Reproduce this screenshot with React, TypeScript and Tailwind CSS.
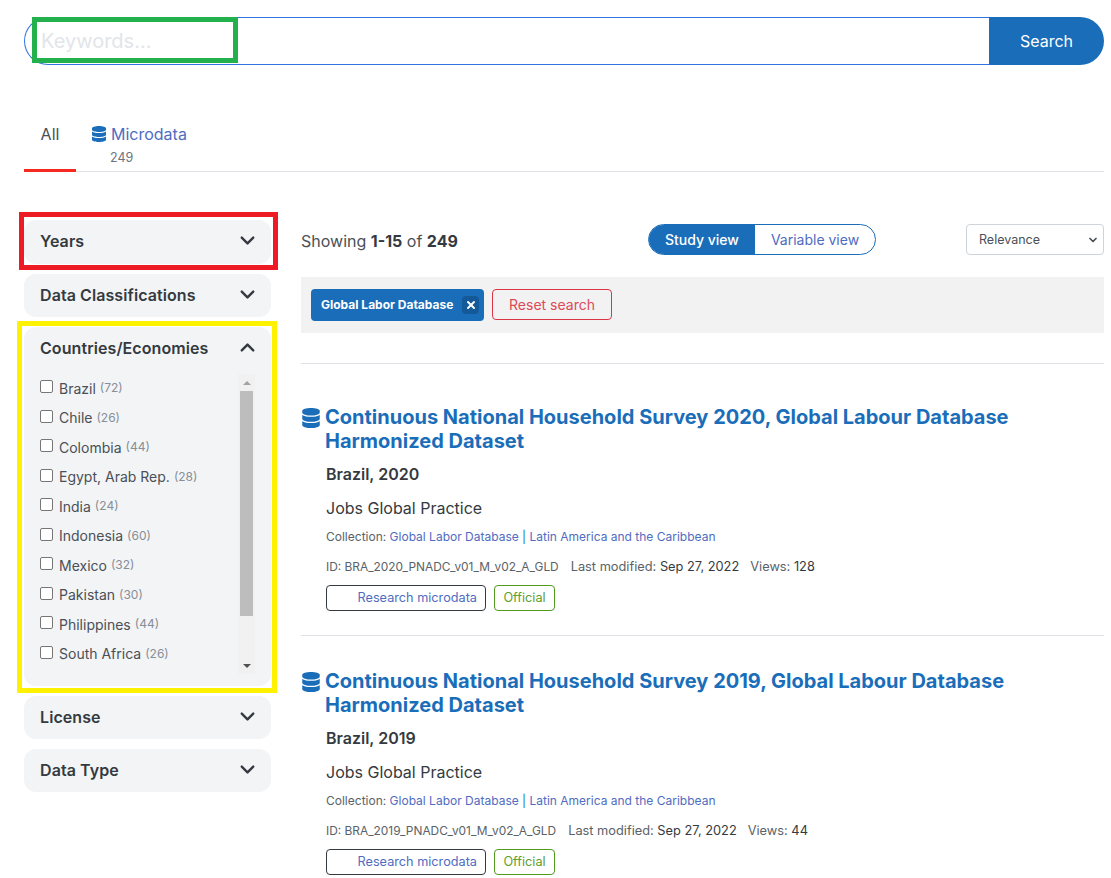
import { ChevronDown, ChevronUp, X } from "lucide-react";

const countries = [
  { name: "Brazil", count: 72 },
  { name: "Chile", count: 26 },
  { name: "Colombia", count: 44 },
  { name: "Egypt, Arab Rep.", count: 28 },
  { name: "India", count: 24 },
  { name: "Indonesia", count: 60 },
  { name: "Mexico", count: 32 },
  { name: "Pakistan", count: 30 },
  { name: "Philippines", count: 44 },
  { name: "South Africa", count: 26 },
];

const studies = [
  { year: 2020, id: "BRA_2020_PNADC_v01_M_v02_A_GLD", modified: "Sep 27, 2022", views: 128 },
  { year: 2019, id: "BRA_2019_PNADC_v01_M_v02_A_GLD", modified: "Sep 27, 2022", views: 44 },
];

function DatabaseIcon({ className }: { className: string }) {
  return (
    <svg className={className} viewBox="0 0 448 512" fill="currentColor">
      <path d="M448 73.1v45.8C448 159.1 347.7 192 224 192S0 159.1 0 118.9V73.1C0 32.9 100.3 0 224 0s224 32.9 224 73.1zM448 176v103c0 40.200-100.300 73-224 73S0 319.200 0 279V176c48.100 33.200 136.200 48.600 224 48.600S399.900 209.200 448 176zm0 160v103c0 40.200-100.300 73-224 73S0 479.200 0 439V336c48.100 33.200 136.200 48.600 224 48.600S399.900 369.200 448 336z" />
    </svg>
  );
}

function FilterCard({ title, tall }: { title: string; tall?: boolean }) {
  return (
    <div className={`flex items-center justify-between rounded-xl bg-[#f3f4f6] pl-4 pr-[12px] ${tall ? "h-[44px]" : "h-[43px]"}`}>
      <span className="mb-[2px] text-[16px] font-semibold tracking-[0.08px] text-[#343a40]">{title}</span>
      <ChevronDown className="mb-[3px] h-[23px] w-[23px] text-[#343a40]" strokeWidth={2.5} />
    </div>
  );
}

function StudyRow({ year, id, modified, views }: (typeof studies)[number]) {
  return (
    <div className="border-b border-[#dee2e6] pb-[24px] pt-[33px] first:pt-[41px] last:border-b-0">
      <div className="flex">
        <DatabaseIcon className="ml-[1px] mt-[3px] h-[20px] w-[18px] shrink-0 text-[#1a6eb9]" />
        <h2 className="ml-[5px] w-[700px] text-[20px] font-bold leading-[24px] text-[#1a6eb9]">
          Continuous National Household Survey {year}, Global Labour Database Harmonized Dataset
        </h2>
      </div>
      <div className="pl-[25px]">
        <div className="mt-[10px] text-[16px] font-semibold leading-[22px] text-[#343a40]">Brazil, {year}</div>
        <div className="mt-[12px] text-[16px] leading-[22px] text-[#343a40]">Jobs Global Practice</div>
        <div className="mt-[9px] text-[12px] leading-[18px] text-[#5a6268]">
          Collection: <span className="text-[#4f6cc0]">Global Labor Database</span>{" "}
          <span className="text-[#1a6eb9]">|</span>{" "}
          <span className="text-[#4f6cc0]">Latin America and the Caribbean</span>
        </div>
        <div className="mt-[12px] flex items-baseline text-[11.9px] leading-[18px] text-[#5a6268]">
          <span>ID: {id}</span>
          <span className="ml-[12px] text-[12.8px]">
            Last modified: <span className="text-[#343a40]">{modified}</span>
          </span>
          <span className="ml-[11px] text-[12.8px]">
            Views: <span className="text-[#343a40]">{views}</span>
          </span>
        </div>
        <div className="mt-[9px] flex gap-2 text-[12.7px]">
          <span className="flex h-[26px] w-[160px] items-center justify-end rounded border border-[#343a40] pr-2 text-[#4f6cc0]">
            Research microdata
          </span>
          <span className="flex h-[26px] w-[61px] items-center justify-center rounded border border-[#4f9a1f] text-[#5f9e2c]">
            Official
          </span>
        </div>
      </div>
    </div>
  );
}

export default function App() {
  return (
    <div className="relative h-[878px] overflow-hidden bg-white pl-6 pr-[7px] pt-[17px] font-['Inter',sans-serif] text-[#343a40]">
      {/* search */}
      <div className="flex h-[48px]">
        <div className="flex flex-1 items-center rounded-l-full border border-r-0 border-[#2f74e0] pl-[16px]">
          <span className="text-[20px] text-[#e2e5e9]">Keywords...</span>
        </div>
        <div className="flex w-[115px] items-center justify-center rounded-r-full bg-[#1a6eb9] text-[16px] text-white">
          Search
        </div>
      </div>

      {/* tabs */}
      <div className="mt-[47px] flex h-[60px] border-b border-[#dee2e6]">
        <div className="flex h-[60px] w-[52px] justify-center border-b-[3px] border-[#f5291f] pt-[11px] text-[16px] leading-[22px] text-[#495057]">
          All
        </div>
        <div className="ml-4 pt-[11px]">
          <div className="flex items-center text-[16px] leading-[22px] text-[#4f6cc0]">
            <DatabaseIcon className="mr-[5px] h-[16px] w-[14px] text-[#1a6eb9]" />
            Microdata
          </div>
          <div className="ml-[18px] mt-[5px] text-[12.5px] leading-[16px] text-[#6c757d]">249</div>
        </div>
      </div>

      <div className="mt-[48px] flex gap-[30px]">
        {/* sidebar */}
        <aside className="flex w-[247px] shrink-0 flex-col gap-[10px]">
          <FilterCard title="Years" tall />
          <FilterCard title="Data Classifications" />
          <div className="h-[359px] rounded-xl bg-[#f3f4f6] pl-4 pr-[16px]">
            <div className="flex h-[43px] items-center justify-between">
              <span className="mb-[2px] text-[16px] font-semibold tracking-[0.08px] text-[#343a40]">Countries/Economies</span>
              <ChevronUp className="mb-[3px] mr-[-4px] h-[23px] w-[23px] text-[#343a40]" strokeWidth={2.5} />
            </div>
            <div className="mt-[4px] flex justify-between">
              <ul className="-mt-[0.5px]">
                {countries.map((c) => (
                  <li key={c.name} className="flex h-[29.5px] items-center text-[14px]">
                    <span className="mb-[3px] h-[13px] w-[13px] rounded-[2px] border border-[#767676] bg-white" />
                    <span className="ml-[6px] text-[#495057]">{c.name}</span>
                    <span className="ml-[4px] text-[12px] text-[#868e96]">({c.count})</span>
                  </li>
                ))}
              </ul>
              <div className="flex h-[300px] w-[17px] flex-col bg-[#f1f1f1]">
                <div className="flex h-[17px] items-center justify-center">
                  <div className="h-0 w-0 border-x-[4px] border-b-[4px] border-x-transparent border-b-[#a3a3a3]" />
                </div>
                <div className="ml-[2px] h-[225px] w-[13px] bg-[#bdbdbd]" />
                <div className="flex-1" />
                <div className="flex h-[17px] items-center justify-center">
                  <div className="h-0 w-0 border-x-[4px] border-t-[4px] border-x-transparent border-t-[#505050]" />
                </div>
              </div>
            </div>
          </div>
          <FilterCard title="License" />
          <FilterCard title="Data Type" />
        </aside>

        {/* results */}
        <main className="min-w-0 flex-1">
          <div className="mt-[4px] flex h-[31px] items-center">
            <div className="mt-[2px] w-[347px] text-[16px] text-[#495057]">
              Showing <b className="font-bold text-[#343a40]">1-15</b> of{" "}
              <b className="font-bold text-[#343a40]">249</b>
            </div>
            <div className="flex h-[31px] w-[228px] overflow-hidden rounded-full border border-[#1a6eb9] text-[14px]">
              <div className="flex w-[106px] items-center justify-center bg-[#1a6eb9] font-medium text-white">
                Study view
              </div>
              <div className="flex flex-1 items-center justify-center text-[#4f6cc0]">Variable view</div>
            </div>
            <div className="ml-auto flex h-[31px] w-[138px] items-center justify-between rounded border border-[#ced4da] pl-3 pr-[4px] text-[12.5px] text-[#495057]">
              <span className="mt-[1px]">Relevance</span>
              <ChevronDown className="h-[12px] w-[12px]" strokeWidth={3.5} />
            </div>
          </div>

          <div className="mt-[22px] flex h-[56px] items-center gap-2 bg-[#f2f2f2] px-[10px]">
            <div className="flex h-[32px] w-[173px] items-center justify-between rounded bg-[#1a6eb9] pl-[10px] pr-[5px] text-[12px] font-bold text-white">
              Global Labor Database
              <span className="flex h-[18px] w-[17px] items-center justify-center rounded-sm bg-[#155a98]">
                <X className="h-[12px] w-[12px]" strokeWidth={4} />
              </span>
            </div>
            <div className="mb-[1px] flex h-[31px] w-[120px] items-center justify-center rounded border border-[#dc3545] text-[14px] text-[#dc4a58]">
              Reset search
            </div>
          </div>

          <div className="mt-[30px] border-t border-[#dee2e6]">
            {studies.map((s) => (
              <StudyRow key={s.year} {...s} />
            ))}
          </div>
        </main>
      </div>

      {/* annotation frames drawn over the screenshot */}
      <div className="absolute left-[32px] top-[17px] h-[46px] w-[206px] border-[5px] border-[#22b14c]" />
      <div className="absolute left-[19px] top-[212px] h-[58px] w-[259px] border-[5px] border-[#ed1c24]" />
      <div className="absolute left-[17px] top-[321px] h-[372px] w-[260px] border-[5px] border-[#fff200]" />
    </div>
  );
}
